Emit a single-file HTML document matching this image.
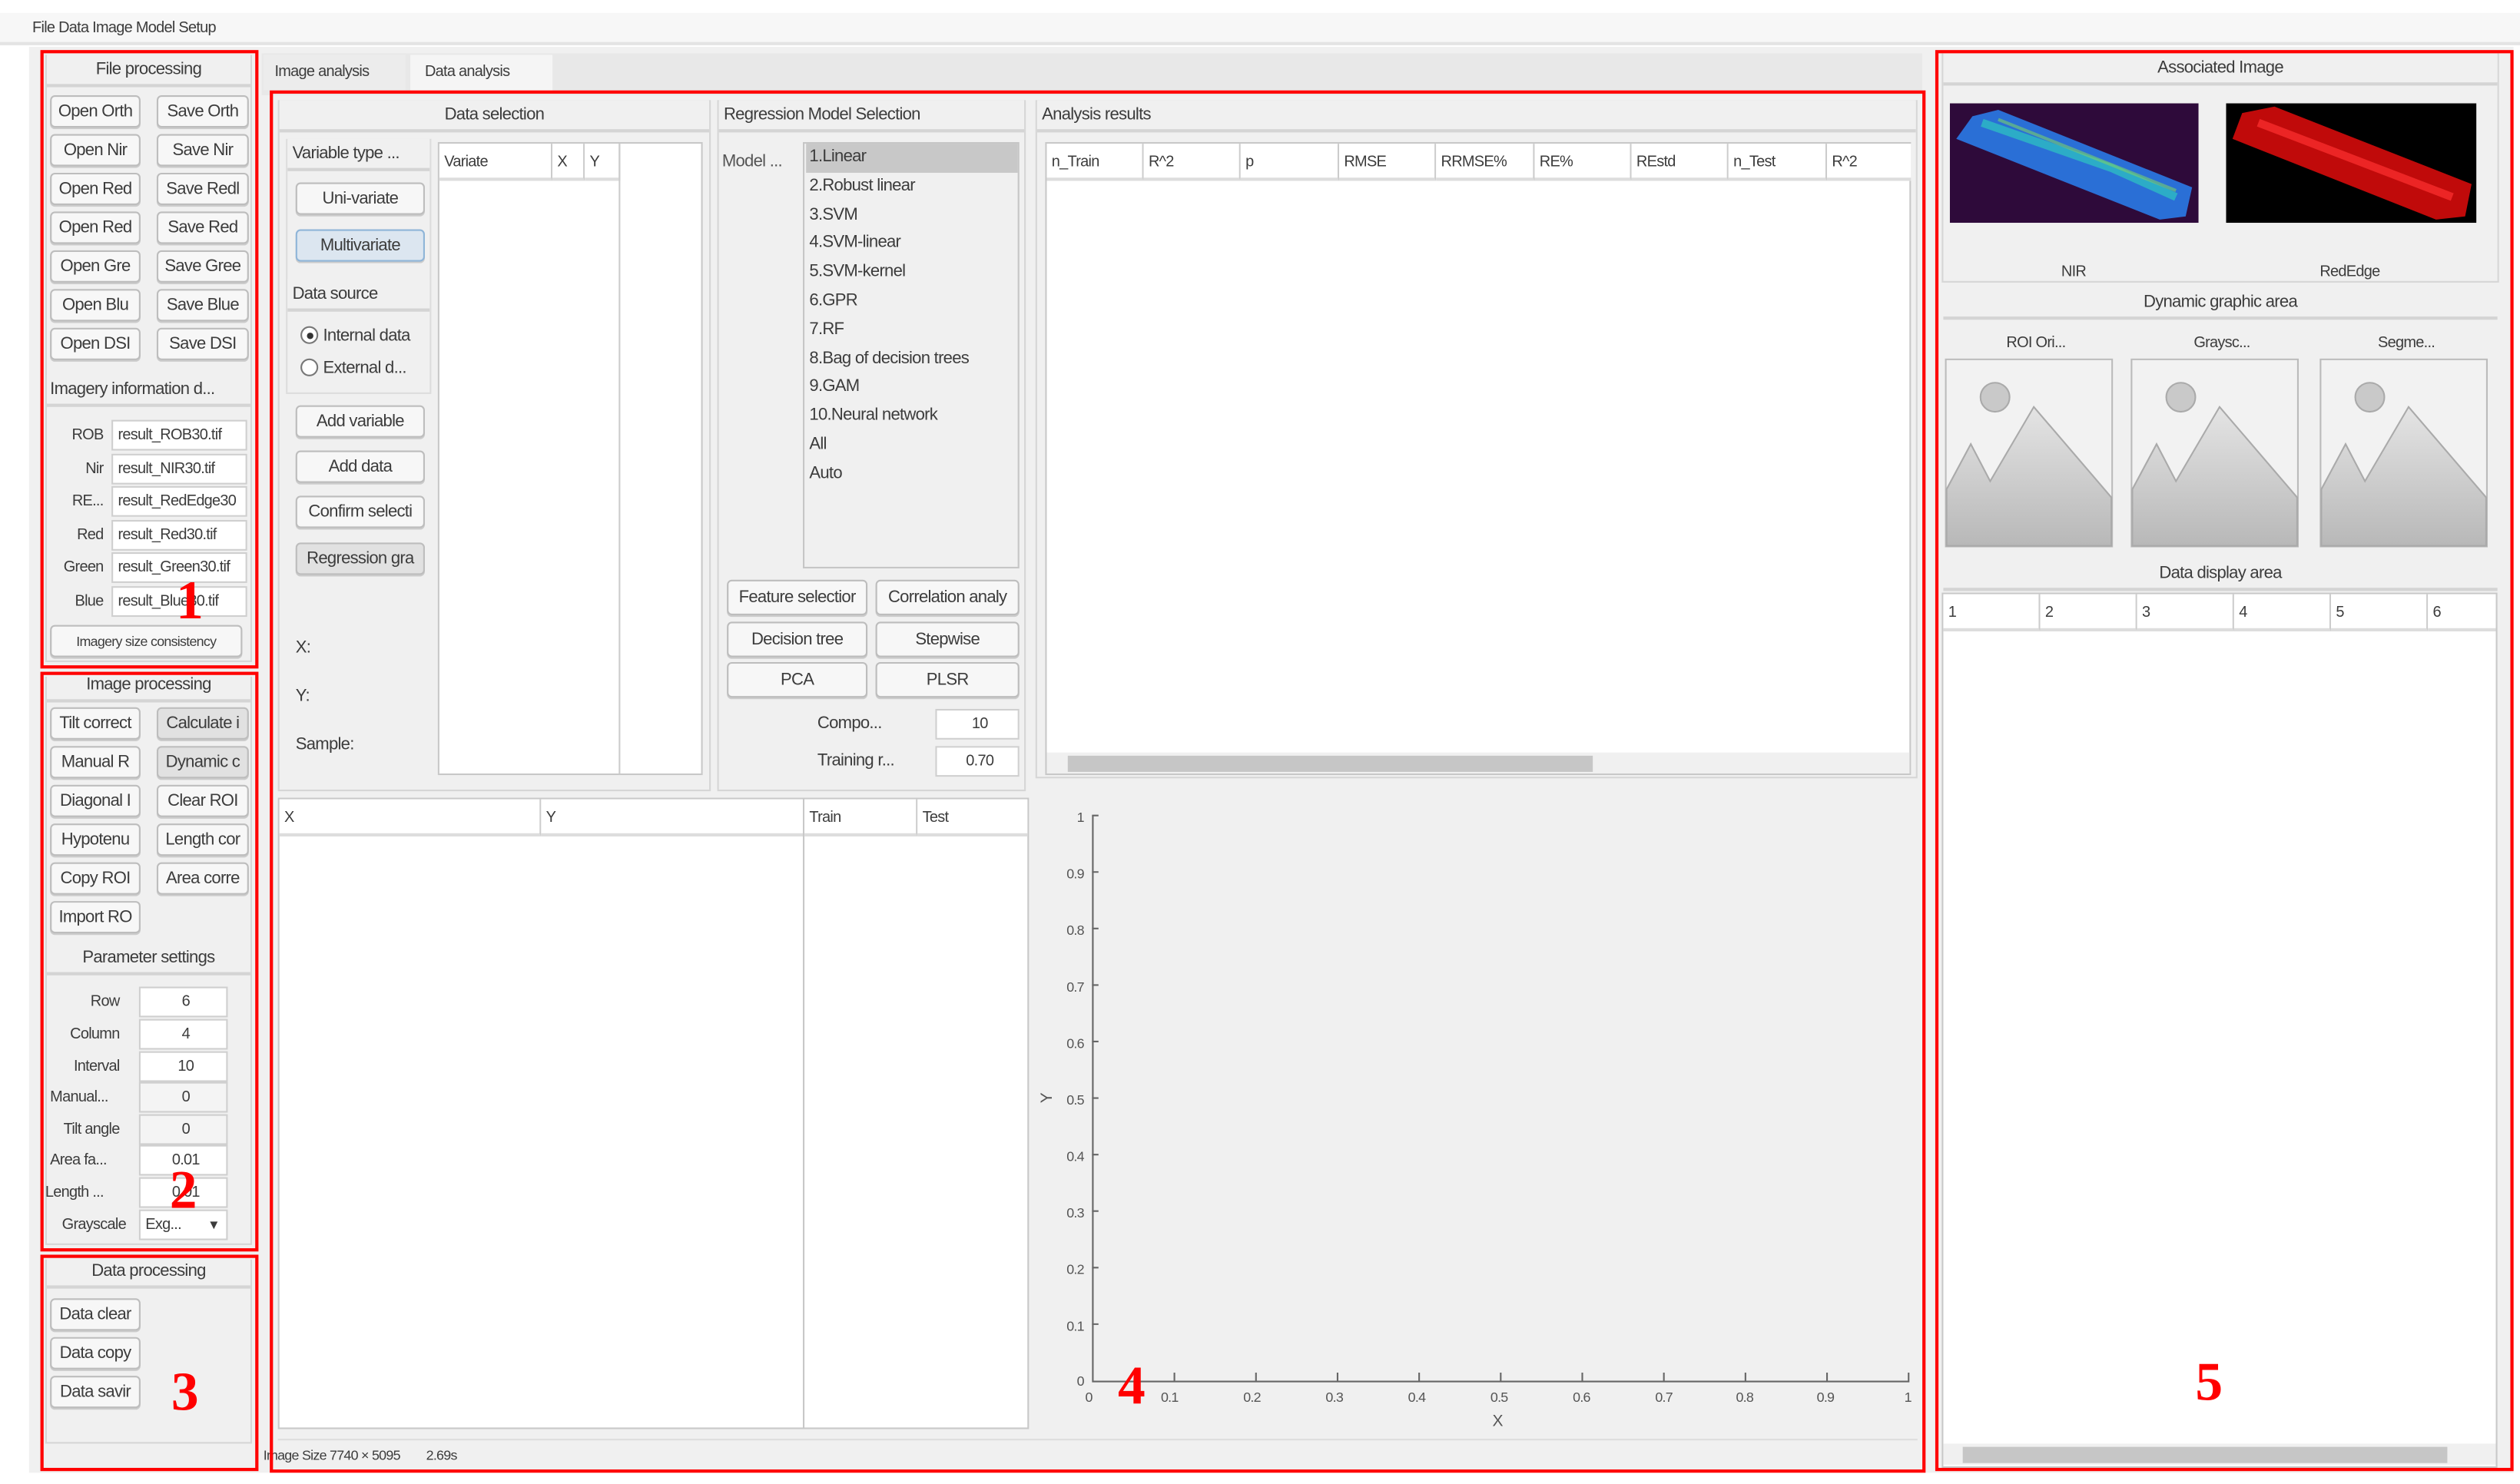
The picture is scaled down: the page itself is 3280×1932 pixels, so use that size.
<!DOCTYPE html>
<html><head><meta charset="utf-8"><style>
*{box-sizing:border-box;margin:0;padding:0}
html,body{width:3280px;height:1932px;background:#fff;overflow:hidden}
#s{position:absolute;left:0;top:0;width:1560px;height:919px;transform:scale(2.1026,2.1023);transform-origin:0 0;font-family:"Liberation Sans",Arial,sans-serif;font-size:10.5px;color:#3c3c3c;letter-spacing:-0.35px}
.a{position:absolute}
.p{position:absolute;border:1px solid #d6d6d6;background:#f0f0f0}
.t{position:absolute;text-align:center;border-bottom:2px solid #d4d4d4;background:#f0f0f0;height:20px;line-height:18px;white-space:nowrap;overflow:hidden}
.b{position:absolute;border:1px solid #bdbdbd;border-radius:3px;background:#f7f7f7;height:20px;line-height:18px;text-align:center;white-space:nowrap;overflow:hidden;box-shadow:0 1px 0 #ccc}
.d{background:#e1e1e1}
.i{position:absolute;background:#fff;border:1px solid #cfcfcf;height:19px;line-height:17px;white-space:nowrap;overflow:hidden;font-size:9.5px;padding-left:3px}
.l{position:absolute;white-space:nowrap;text-align:right;font-size:9.5px}
.r{position:absolute;border:2.5px solid #f00}
.n{position:absolute;color:#f00;font-family:"Liberation Serif",serif;font-weight:bold;font-size:34px;line-height:34px}
.w{position:absolute;background:#fff;border:1px solid #c8c8c8}
.h{position:absolute;top:0;height:23px;line-height:23px;border-right:1px solid #ccc;font-size:9.5px;padding-left:3px;background:#fff;border-bottom:2px solid #ddd}
</style></head><body><div id="s">
<div class="a" style="left:0;top:8px;width:1560px;height:20px;background:#f7f7f7;border-bottom:2px solid #e4e4e4"></div>
<div class="a" style="left:20px;top:12px;font-size:9.5px">File Data Image Model Setup</div>
<div class="a" style="left:18px;top:29px;width:1538px;height:883px;background:#f0f0f0"></div>

<div class="p" style="left:28px;top:34px;width:128px;height:376px"></div>
<div class="t" style="left:29px;top:34px;width:126px">File processing</div>
<div class="b" style="left:31px;top:59px;width:56px">Open Orth</div><div class="b" style="left:97px;top:59px;width:57px">Save Orth</div>
<div class="b" style="left:31px;top:83px;width:56px">Open Nir</div><div class="b" style="left:97px;top:83px;width:57px">Save Nir</div>
<div class="b" style="left:31px;top:107px;width:56px">Open Red</div><div class="b" style="left:97px;top:107px;width:57px">Save Redl</div>
<div class="b" style="left:31px;top:131px;width:56px">Open Red</div><div class="b" style="left:97px;top:131px;width:57px">Save Red</div>
<div class="b" style="left:31px;top:155px;width:56px">Open Gre</div><div class="b" style="left:97px;top:155px;width:57px">Save Gree</div>
<div class="b" style="left:31px;top:179px;width:56px">Open Blu</div><div class="b" style="left:97px;top:179px;width:57px">Save Blue</div>
<div class="b" style="left:31px;top:203px;width:56px">Open DSI</div><div class="b" style="left:97px;top:203px;width:57px">Save DSI</div>
<div class="t" style="left:29px;top:232px;width:126px;text-align:left;padding-left:2px">Imagery information d...</div>
<div class="l" style="left:30px;top:264px;width:34px">ROB</div><div class="i" style="left:69px;top:260px;width:84px">result_ROB30.tif</div>
<div class="l" style="left:30px;top:285px;width:34px">Nir</div><div class="i" style="left:69px;top:281px;width:84px">result_NIR30.tif</div>
<div class="l" style="left:30px;top:305px;width:34px">RE...</div><div class="i" style="left:69px;top:301px;width:84px">result_RedEdge30</div>
<div class="l" style="left:30px;top:326px;width:34px">Red</div><div class="i" style="left:69px;top:322px;width:84px">result_Red30.tif</div>
<div class="l" style="left:30px;top:346px;width:34px">Green</div><div class="i" style="left:69px;top:342px;width:84px">result_Green30.tif</div>
<div class="l" style="left:30px;top:367px;width:34px">Blue</div><div class="i" style="left:69px;top:363px;width:84px">result_Blue30.tif</div>
<div class="b" style="left:31px;top:387px;width:119px;font-size:8.5px">Imagery size consistency</div>
<div class="r" style="left:25px;top:31px;width:135px;height:383px"></div>
<div class="n" style="left:109px;top:356px">1</div>

<div class="p" style="left:28px;top:419px;width:128px;height:352px"></div>
<div class="t" style="left:29px;top:415px;width:126px">Image processing</div>
<div class="b" style="left:31px;top:438px;width:56px">Tilt correct</div><div class="b d" style="left:97px;top:438px;width:57px">Calculate i</div>
<div class="b" style="left:31px;top:462px;width:56px">Manual R</div><div class="b d" style="left:97px;top:462px;width:57px">Dynamic c</div>
<div class="b" style="left:31px;top:486px;width:56px">Diagonal I</div><div class="b" style="left:97px;top:486px;width:57px">Clear ROI</div>
<div class="b" style="left:31px;top:510px;width:56px">Hypotenu</div><div class="b" style="left:97px;top:510px;width:57px">Length cor</div>
<div class="b" style="left:31px;top:534px;width:56px">Copy ROI</div><div class="b" style="left:97px;top:534px;width:57px">Area corre</div>
<div class="b" style="left:31px;top:558px;width:56px">Import RO</div>
<div class="t" style="left:29px;top:584px;width:126px">Parameter settings</div>
<div class="l" style="left:28px;top:615px;width:46px">Row</div><div class="i" style="left:86px;top:611px;width:55px;text-align:center">6</div>
<div class="l" style="left:28px;top:635px;width:46px">Column</div><div class="i" style="left:86px;top:631px;width:55px;text-align:center">4</div>
<div class="l" style="left:28px;top:655px;width:46px">Interval</div><div class="i" style="left:86px;top:651px;width:55px;text-align:center">10</div>
<div class="l" style="left:28px;top:674px;width:46px;text-align:left;padding-left:3px">Manual...</div><div class="i" style="left:86px;top:670px;width:55px;text-align:center;background:#f4f4f4">0</div>
<div class="l" style="left:28px;top:694px;width:46px">Tilt angle</div><div class="i" style="left:86px;top:690px;width:55px;text-align:center;background:#f4f4f4">0</div>
<div class="l" style="left:28px;top:713px;width:46px;text-align:left;padding-left:3px">Area fa...</div><div class="i" style="left:86px;top:709px;width:55px;text-align:center">0.01</div>
<div class="l" style="left:28px;top:733px;width:46px;text-align:left">Length ...</div><div class="i" style="left:86px;top:729px;width:55px;text-align:center">0.01</div>
<div class="l" style="left:28px;top:753px;width:50px">Grayscale</div><div class="i" style="left:86px;top:749px;width:55px">Exg... <span style="float:right;margin-right:4px;font-size:8px">▼</span></div>
<div class="r" style="left:25px;top:416px;width:135px;height:359px"></div>
<div class="n" style="left:105px;top:721px">2</div>

<div class="p" style="left:28px;top:780px;width:128px;height:114px"></div>
<div class="t" style="left:29px;top:778px;width:126px">Data processing</div>
<div class="b" style="left:31px;top:804px;width:56px">Data clear</div>
<div class="b" style="left:31px;top:828px;width:56px">Data copy</div>
<div class="b" style="left:31px;top:852px;width:56px">Data savir</div>
<div class="r" style="left:25px;top:777px;width:135px;height:134px"></div>
<div class="n" style="left:106px;top:846px">3</div>

<div class="a" style="left:162px;top:33px;width:1028px;height:26px;background:#e8e8e8"></div>
<div class="a" style="left:163px;top:34px;width:88px;height:22px;line-height:22px;padding-left:7px;font-size:9.5px;background:#ececec">Image analysis</div>
<div class="a" style="left:254px;top:34px;width:88px;height:24px;line-height:22px;padding-left:9px;font-size:9.5px;background:#f5f5f5">Data analysis</div>

<div class="p" style="left:172px;top:62px;width:268px;height:428px"></div>
<div class="t" style="left:173px;top:62px;width:266px">Data selection</div>
<div class="p" style="left:177px;top:86px;width:90px;height:158px;border-color:#ddd"></div>
<div class="t" style="left:178px;top:86px;width:88px;text-align:left;padding-left:3px">Variable type ...</div>
<div class="b" style="left:183px;top:113px;width:80px">Uni-variate</div>
<div class="b" style="left:183px;top:142px;width:80px;background:#dce6f0;border-color:#8fb5d8">Multivariate</div>
<div class="t" style="left:178px;top:173px;width:88px;text-align:left;padding-left:3px">Data source</div>
<div class="a" style="left:186px;top:202px;width:11px;height:11px;border:1px solid #777;border-radius:50%;background:#fff"><div class="a" style="left:2.5px;top:2.5px;width:4px;height:4px;border-radius:50%;background:#333"></div></div>
<div class="a" style="left:200px;top:202px">Internal data</div>
<div class="a" style="left:186px;top:222px;width:11px;height:11px;border:1px solid #777;border-radius:50%;background:#fff"></div>
<div class="a" style="left:200px;top:222px">External d...</div>
<div class="b" style="left:183px;top:251px;width:80px">Add variable</div>
<div class="b" style="left:183px;top:279px;width:80px">Add data</div>
<div class="b" style="left:183px;top:307px;width:80px">Confirm selecti</div>
<div class="b d" style="left:183px;top:336px;width:80px">Regression gra</div>
<div class="a" style="left:183px;top:395px">X:</div>
<div class="a" style="left:183px;top:425px">Y:</div>
<div class="a" style="left:183px;top:455px">Sample:</div>
<div class="w" style="left:271px;top:88px;width:164px;height:392px">
<div class="h" style="left:0;width:70px">Variate</div><div class="h" style="left:70px;width:20px">X</div><div class="h" style="left:90px;width:22px">Y</div>
<div class="a" style="left:111px;top:0;width:1px;height:390px;background:#ccc"></div></div>

<div class="p" style="left:444px;top:62px;width:191px;height:428px"></div>
<div class="t" style="left:445px;top:62px;width:189px;text-align:left;padding-left:3px">Regression Model Selection</div>
<div class="a" style="left:447px;top:94px;color:#555">Model ...</div>
<div class="a" style="left:497px;top:88px;width:134px;height:264px;background:#f0f0f0;border:1px solid #c6c6c6;line-height:17.8px;padding-left:3px">
<div style="background:#c8c8c8;margin-left:-2px;padding-left:2px">1.Linear</div>2.Robust linear<br>3.SVM<br>4.SVM-linear<br>5.SVM-kernel<br>6.GPR<br>7.RF<br>8.Bag of decision trees<br>9.GAM<br>10.Neural network<br>All<br>Auto</div>
<div class="b" style="left:450px;top:359px;width:87px;height:22px;line-height:20px">Feature selectior</div><div class="b" style="left:542px;top:359px;width:89px;height:22px;line-height:20px">Correlation analy</div>
<div class="b" style="left:450px;top:385px;width:87px;height:22px;line-height:20px">Decision tree</div><div class="b" style="left:542px;top:385px;width:89px;height:22px;line-height:20px">Stepwise</div>
<div class="b" style="left:450px;top:410px;width:87px;height:22px;line-height:20px">PCA</div><div class="b" style="left:542px;top:410px;width:89px;height:22px;line-height:20px">PLSR</div>
<div class="a" style="left:506px;top:442px">Compo...</div><div class="i" style="left:579px;top:439px;width:52px;text-align:center">10</div>
<div class="a" style="left:506px;top:465px">Training r...</div><div class="i" style="left:579px;top:462px;width:52px;text-align:center">0.70</div>

<div class="p" style="left:641px;top:62px;width:546px;height:420px"></div>
<div class="t" style="left:642px;top:62px;width:544px;text-align:left;padding-left:3px">Analysis results</div>
<div class="w" style="left:647px;top:88px;width:536px;height:392px">
<div class="h" style="left:0;width:60px">n_Train</div><div class="h" style="left:60px;width:60px">R^2</div><div class="h" style="left:120px;width:61px">p</div><div class="h" style="left:181px;width:60px">RMSE</div><div class="h" style="left:241px;width:61px">RRMSE%</div><div class="h" style="left:302px;width:60px">RE%</div><div class="h" style="left:362px;width:60px">REstd</div><div class="h" style="left:422px;width:61px">n_Test</div><div class="h" style="left:483px;width:52px;border-right:0">R^2</div>
<div class="a" style="left:0;top:377px;width:534px;height:13px;background:#f0f0f0"></div>
<div class="a" style="left:13px;top:379px;width:325px;height:10px;background:#c6c6c6"></div></div>

<div class="w" style="left:172px;top:494px;width:326px;height:391px">
<div class="h" style="left:0;width:162px">X</div><div class="h" style="left:162px;width:162px;border-right:0">Y</div></div>
<div class="w" style="left:497px;top:494px;width:140px;height:391px">
<div class="h" style="left:0;width:70px">Train</div><div class="h" style="left:70px;width:68px;border-right:0">Test</div></div>

<svg class="a" style="left:640px;top:495px" width="550" height="395" viewBox="640 495 550 395">
<g stroke="#666" stroke-width="1" fill="none">
<path d="M676.5 505V855.5H1182"/>
<path d="M676 505h4M676 540h4M676 575h4M676 610h4M676 645h4M676 680h4M676 715h4M676 750h4M676 785h4M676 820h4"/>
<path d="M727 855v-5M777.5 855v-5M828 855v-5M878.5 855v-5M929 855v-5M979.5 855v-5M1030 855v-5M1080.5 855v-5M1131 855v-5M1181.5 855v-5"/>
</g>
<g font-family="Liberation Sans,Arial,sans-serif" font-size="8.5" fill="#555" text-anchor="end">
<text x="671" y="509">1</text><text x="671" y="544">0.9</text><text x="671" y="579">0.8</text><text x="671" y="614">0.7</text><text x="671" y="649">0.6</text><text x="671" y="684">0.5</text><text x="671" y="719">0.4</text><text x="671" y="754">0.3</text><text x="671" y="789">0.2</text><text x="671" y="824">0.1</text><text x="671" y="858">0</text>
</g>
<g font-family="Liberation Sans,Arial,sans-serif" font-size="8.5" fill="#555" text-anchor="middle">
<text x="674" y="868">0</text><text x="724" y="868">0.1</text><text x="775" y="868">0.2</text><text x="826" y="868">0.3</text><text x="877" y="868">0.4</text><text x="928" y="868">0.5</text><text x="979" y="868">0.6</text><text x="1030" y="868">0.7</text><text x="1080" y="868">0.8</text><text x="1130" y="868">0.9</text><text x="1181" y="868">1</text>
<text x="927" y="883" font-size="10">X</text>
<text x="648" y="683" font-size="10" transform="rotate(-90 648 680)">Y</text>
</g></svg>
<div class="a" style="left:172px;top:891px;width:1015px;height:1px;background:#ddd"></div>
<div class="a" style="left:163px;top:896px;font-size:8.5px">Image Size 7740 × 5095 &nbsp;&nbsp;&nbsp;&nbsp;&nbsp;&nbsp;&nbsp;2.69s</div>
<div class="r" style="left:167px;top:56px;width:1025px;height:856px"></div>
<div class="n" style="left:692px;top:842px">4</div>

<div class="p" style="left:1202px;top:33px;width:345px;height:142px"></div>
<div class="t" style="left:1203px;top:33px;width:343px">Associated Image</div>
<svg class="a" style="left:1207px;top:64px" width="154" height="74" viewBox="0 0 154 74"><rect width="154" height="74" fill="#2e0a3a"/><path d="M14 8L30 4 150 52 146 70 130 72 4 22Z" fill="#2a6fd6"/><path d="M20 12L60 26 100 40 140 58" stroke="#2ec6c0" stroke-width="5" fill="none" opacity=".7"/><path d="M30 10L140 54" stroke="#7ad06a" stroke-width="2" fill="none" opacity=".6"/></svg>
<svg class="a" style="left:1378px;top:64px" width="155" height="74" viewBox="0 0 155 74"><rect width="155" height="74" fill="#000"/><path d="M10 6L30 2 152 50 148 70 130 72 4 22Z" fill="#c00a0a"/><path d="M20 12L140 58" stroke="#ff3030" stroke-width="5" fill="none" opacity=".7"/></svg>
<div class="a" style="left:1276px;top:163px;font-size:9.5px">NIR</div>
<div class="a" style="left:1436px;top:163px;font-size:9.5px">RedEdge</div>
<div class="t" style="left:1203px;top:178px;width:343px">Dynamic graphic area</div>
<div class="a" style="left:1242px;top:207px;font-size:9.5px">ROI Ori...</div>
<div class="a" style="left:1358px;top:207px;font-size:9.5px">Graysc...</div>
<div class="a" style="left:1472px;top:207px;font-size:9.5px">Segme...</div>
<svg class="a" style="left:1204px;top:222px" width="340" height="117" viewBox="0 0 340 117">
<defs><linearGradient id="g" x1="0" y1="0" x2="0" y2="1"><stop offset="0" stop-color="#e4e4e4"/><stop offset="1" stop-color="#b8b8b8"/></linearGradient></defs>
<g id="ph"><rect x=".5" y=".5" width="103" height="116" fill="#f2f2f2" stroke="#bbb"/><circle cx="31" cy="24" r="9" fill="#c9c9c9" stroke="#aaa"/><path d="M1 81L16 53 28 76 55 30 103 86V116H1Z" fill="url(#g)" stroke="#aaa"/></g>
<use href="#ph" x="115"/><use href="#ph" x="232"/></svg>
<div class="t" style="left:1203px;top:346px;width:343px">Data display area</div>
<div class="w" style="left:1202px;top:367px;width:344px;height:542px">
<div class="h" style="left:0;width:60px">1</div><div class="h" style="left:60px;width:60px">2</div><div class="h" style="left:120px;width:60px">3</div><div class="h" style="left:180px;width:60px">4</div><div class="h" style="left:240px;width:60px">5</div><div class="h" style="left:300px;width:42px;border-right:0">6</div>
<div class="a" style="left:0;top:526px;width:342px;height:13px;background:#f0f0f0"></div>
<div class="a" style="left:12px;top:528px;width:300px;height:10px;background:#c6c6c6"></div></div>
<div class="r" style="left:1198px;top:31px;width:358px;height:880px"></div>
<div class="n" style="left:1359px;top:840px">5</div>
</div></body></html>
